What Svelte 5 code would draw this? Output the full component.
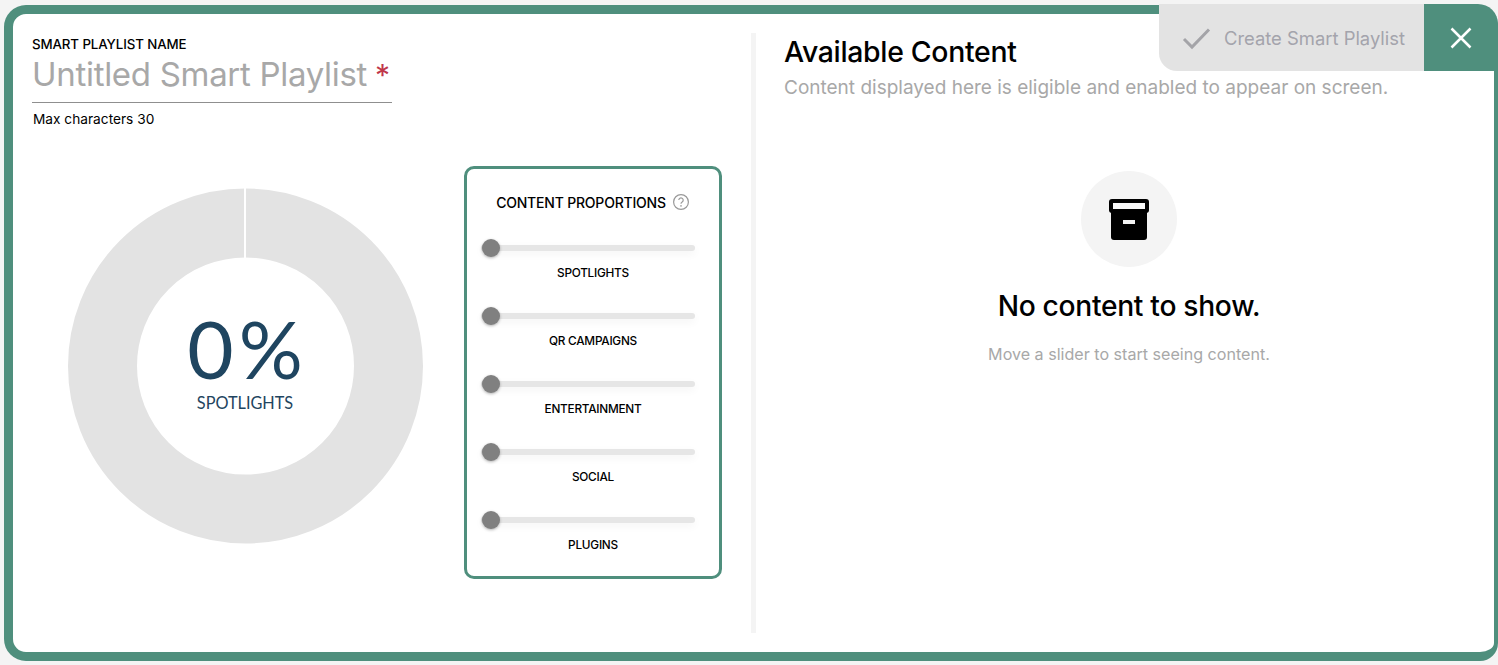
<script>
  const sliders = ['SPOTLIGHTS', 'QR CAMPAIGNS', 'ENTERTAINMENT', 'SOCIAL', 'PLUGINS'];
</script>

<div class="page">
  <main class="frame">
    <section class="left">
      <div class="name-field">
        <div class="name-label">SMART PLAYLIST NAME</div>
        <div class="name-input"><span class="placeholder">Untitled Smart Playlist</span><span class="req">*</span></div>
        <div class="name-hint">Max characters 30</div>
      </div>
      <div class="charts">
        <div class="donut">
          <svg width="356" height="356" viewBox="0 0 356 356" aria-hidden="true">
            <circle cx="178.500" cy="178" r="143" fill="none" stroke="#e3e3e3" stroke-width="69" />
            <rect x="177" y="0" width="2" height="70" fill="#fff" />
          </svg>
          <div class="donut-text">
            <div class="pct">0%</div>
            <div class="pct-label">SPOTLIGHTS</div>
          </div>
        </div>
        <div class="card">
          <div class="card-title">
            <span>CONTENT PROPORTIONS</span>
            <svg width="18" height="18" viewBox="0 0 18 18" aria-hidden="true">
              <circle cx="9" cy="9" r="7.4" fill="none" stroke="#999" stroke-width="1.2" />
              <path d="M6.800 7.100a2.200 2.200 0 1 1 3.400 1.900c-.8.500-1.200.9-1.200 1.800" fill="none" stroke="#999" stroke-width="1.2" />
              <circle cx="9" cy="12.900" r=".8" fill="#999" />
            </svg>
          </div>
          {#each sliders as s}
            <div class="slider">
              <div class="track"><div class="thumb"></div></div>
              <div class="slider-label">{s}</div>
            </div>
          {/each}
        </div>
      </div>
    </section>
    <div class="divider"></div>
    <section class="right">
      <h2>Available Content</h2>
      <p class="sub">Content displayed here is eligible and enabled to appear on screen.</p>
      <div class="empty">
        <div class="empty-icon">
          <svg width="40" height="41" viewBox="0 0 40 41" aria-hidden="true">
            <rect x="2" y="8" width="36" height="33" rx="3" fill="#000" />
            <rect x="0" y="0" width="40" height="14" rx="3" fill="#000" />
            <rect x="4" y="4" width="32" height="6" fill="#f8f8f8" />
            <rect x="14" y="21" width="12" height="4" fill="#f4f4f4" />
          </svg>
        </div>
        <div class="empty-title">No content to show.</div>
        <div class="empty-sub">Move a slider to start seeing content.</div>
      </div>
    </section>
  </main>
  <div class="actions">
    <button class="create" disabled>
      <svg width="30" height="24" viewBox="0 0 30 24" aria-hidden="true">
        <path d="M2 13l8 8L27 3.500" fill="none" stroke="#a4a4a8" stroke-width="3" />
      </svg>
      <span>Create Smart Playlist</span>
    </button>
    <button class="close" aria-label="Close">
      <svg width="24" height="24" viewBox="0 0 24 24" aria-hidden="true">
        <path d="M2.500 2.500l19 19M21.500 2.500l-19 19" fill="none" stroke="#fff" stroke-width="2.500" />
      </svg>
    </button>
  </div>
</div>

<style>
  :global(body) {
    margin: 0;
    background: #f4f4f4;
    font-family: Inter, "Noto Sans", sans-serif;
  }
  .page {
    position: relative;
    width: 1498px;
    height: 665px;
    padding: 5px 0 4px 4px;
    box-sizing: border-box;
    overflow: hidden;
  }
  .frame {
    display: flex;
    box-sizing: border-box;
    height: 656px;
    border: solid #4f8f7d;
    border-width: 9px 4px 9px 9px;
    border-radius: 22px 22px 18px 22px;
    background: #fff;
  }
  .left {
    width: 738px;
    flex: none;
    padding: 23px 0 0 19px;
    box-sizing: border-box;
  }
  .name-label {
    font-size: 13.300px;
    font-weight: 500;
    line-height: 15px;
    color: #000;
    letter-spacing: -0.1px;
    white-space: nowrap;
  }
  .name-input {
    width: 360px;
    height: 51px;
    border-bottom: 1px solid #8f8f8f;
    font-size: 33px;
    line-height: 45px;
    color: #a8a8a8;
    box-sizing: border-box;
    white-space: nowrap;
    letter-spacing: -0.3px;
  }
  .req {
    color: #c0374a;
    margin-left: 8px;
    font-size: 30px;
  }
  .name-hint {
    font-size: 13.700px;
    line-height: 16px;
    color: #000;
    margin-top: 8px;
    padding-left: 1px;
  }
  .charts {
    display: flex;
    align-items: flex-start;
    margin-top: 39px;
  }
  .donut {
    position: relative;
    width: 356px;
    height: 356px;
    margin: 22px 0 0 35px;
    flex: none;
  }
  .donut svg {
    display: block;
  }
  .donut-text {
    position: absolute;
    inset: 0;
    display: flex;
    flex-direction: column;
    align-items: center;
    justify-content: center;
    color: #1f4560;
    font-family: Lato, sans-serif;
  }
  .pct {
    font-size: 80px;
    line-height: 58px;
    letter-spacing: 5px;
    padding-left: 5px;
  }
  .pct-label {
    font-size: 16.300px;
    line-height: 20px;
    margin-top: 16px;
  }
  .card {
    width: 258px;
    height: 413px;
    box-sizing: border-box;
    margin-left: 41px;
    border: 3px solid #4f8f7d;
    border-radius: 10px;
    padding: 0 24px 0 14px;
    flex: none;
  }
  .card-title {
    display: flex;
    align-items: center;
    justify-content: center;
    gap: 6px;
    height: 18px;
    margin: 24px -10px 0 0;
    font-size: 14px;
    font-weight: 500;
    color: #000;
    letter-spacing: -0.2px;
    white-space: nowrap;
  }
  .card-title + .slider {
    margin-top: 34px;
  }
  .slider {
    height: 68px;
  }
  .track {
    position: relative;
    height: 6px;
    border-radius: 3px;
    background: #e6e6e6;
    box-shadow: 0 3px 8px rgba(0, 0, 0, 0.05);
  }
  .thumb {
    position: absolute;
    left: 1px;
    top: -6px;
    width: 18px;
    height: 18px;
    border-radius: 50%;
    background: #808080;
    box-shadow: 0 1px 3px rgba(0, 0, 0, 0.3);
  }
  .slider-label {
    text-align: center;
    font-size: 11.800px;
    font-weight: 500;
    line-height: 14px;
    margin: 15px -10px 0 0;
    color: #000;
    letter-spacing: -0.25px;
  }
  .divider {
    width: 5px;
    height: 600px;
    margin-top: 19px;
    background: #f4f4f4;
    flex: none;
  }
  .right {
    flex: 1;
    padding: 21px 0 0 28px;
    box-sizing: border-box;
    min-width: 0;
  }
  h2 {
    margin: 0;
    font-size: 28.400px;
    line-height: 34px;
    font-weight: 500;
    color: #000;
    letter-spacing: -0.3px;
    white-space: nowrap;
  }
  .sub {
    margin: 7px 0 0;
    font-size: 19px;
    line-height: 24px;
    color: #a8a8a8;
    white-space: nowrap;
  }
  .empty {
    display: flex;
    flex-direction: column;
    align-items: center;
    width: 690px;
    margin-top: 71px;
  }
  .empty-icon {
    display: flex;
    align-items: center;
    justify-content: center;
    width: 96px;
    height: 96px;
    border-radius: 50%;
    background: #f4f4f4;
  }
  .empty-title {
    margin-top: 21px;
    font-size: 28.200px;
    line-height: 36px;
    font-weight: 500;
    color: #000;
    letter-spacing: -0.3px;
  }
  .empty-sub {
    margin-top: 20px;
    font-size: 16.100px;
    line-height: 20px;
    color: #a8a8a8;
  }
  .actions {
    position: absolute;
    top: 4px;
    right: 0;
    display: flex;
    height: 67px;
  }
  button {
    border: 0;
    padding: 0;
    margin: 0;
    font: inherit;
  }
  .create {
    display: flex;
    align-items: center;
    width: 265px;
    box-sizing: border-box;
    padding-left: 23px;
    gap: 12px;
    background: #e3e3e3;
    border-bottom-left-radius: 18px;
    color: #a4a4ac;
    font-size: 18.400px;
    white-space: nowrap;
  }
  .close {
    display: flex;
    align-items: center;
    justify-content: center;
    width: 74px;
    background: #4f8f7d;
    border-top-right-radius: 20px;
  }
</style>
